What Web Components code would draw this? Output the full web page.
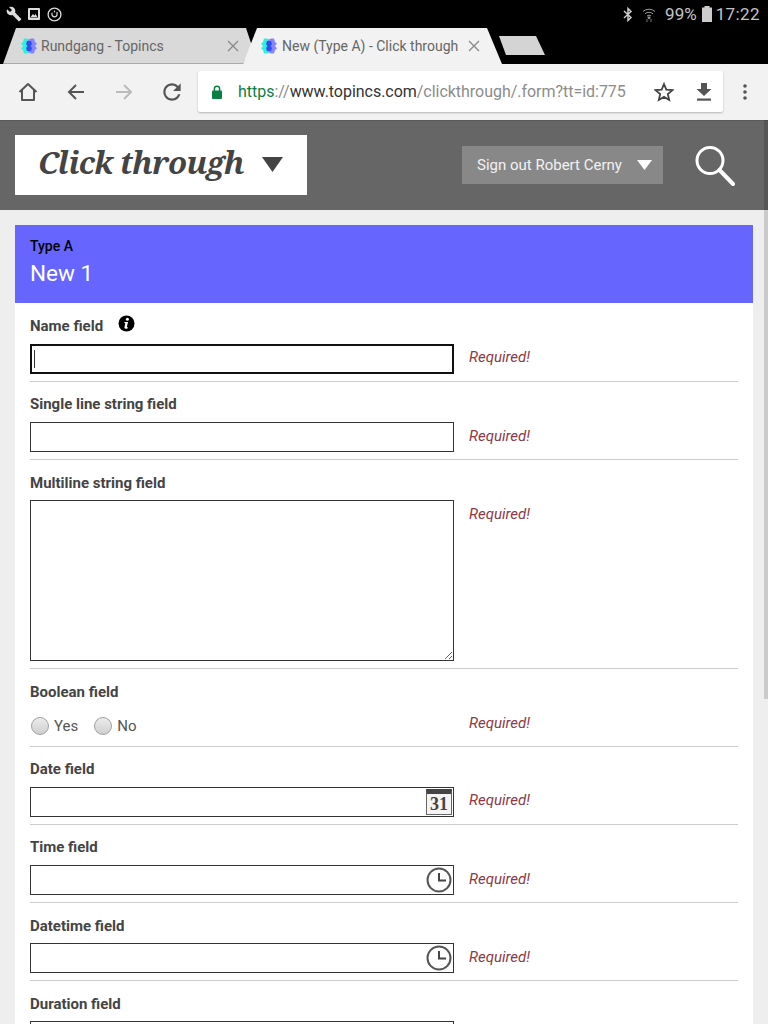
<!DOCTYPE html>
<html lang="en">
<head>
<meta charset="utf-8">
<title>New (Type A) - Click through</title>
<style>
  html, body { margin: 0; height: 1024px; overflow: hidden; background: #eee; }
  body { font-family: Roboto, "Liberation Sans", sans-serif; position: relative; }
</style>
</head>
<body>
<status-bar></status-bar>
<tab-strip>
  <browser-tab title-text="Rundgang - Topincs" inactive></browser-tab>
  <browser-tab title-text="New (Type A) - Click through"></browser-tab>
</tab-strip>
<browser-toolbar></browser-toolbar>
<page-header></page-header>
<form-card kind="Type A" name="New 1">
  <form-field label="Name field" info first>
    <text-control focused></text-control>
  </form-field>
  <form-field label="Single line string field" style="--hint-nudge:1px">
    <text-control></text-control>
  </form-field>
  <form-field label="Multiline string field" style="--label-nudge:1px;--hint-nudge:1px">
    <text-control multiline></text-control>
  </form-field>
  <form-field label="Boolean field" style="--label-nudge:1px">
    <bool-control></bool-control>
  </form-field>
  <form-field label="Date field" style="--hint-nudge:-1px">
    <text-control icon="calendar"></text-control>
  </form-field>
  <form-field label="Time field">
    <text-control icon="clock"></text-control>
  </form-field>
  <form-field label="Datetime field" style="--label-nudge:1px">
    <text-control icon="clock"></text-control>
  </form-field>
  <form-field label="Duration field" style="--label-nudge:1px" no-hint>
    <text-control></text-control>
  </form-field>
</form-card>
<page-scrollbar></page-scrollbar>

<script>
class StatusBar extends HTMLElement {
  constructor() {
    super();
    this.attachShadow({ mode: 'open' });
    this.shadowRoot.innerHTML = `
      <style>
        :host { display: flex; align-items: center; height: 28px; background: #000; padding: 0 8px 0 6px; box-sizing: border-box; color: #c4c4c4; font-size: 17px; }
        svg { display: block; flex: none; }
        .spacer { flex: 1; }
        .pct { margin-left: 9px; }
        .time { margin-left: 4px; letter-spacing: .4px; }
      </style>
      <svg width="16" height="16" viewBox="0 0 24 24" fill="#ddd"><path d="M22.7 19l-9.1-9.1c.9-2.3.4-5-1.5-6.9-2-2-5-2.4-7.4-1.3L9 6 6 9 1.6 4.7C.4 7.1.9 10.1 2.9 12.1c1.9 1.9 4.6 2.4 6.9 1.5l9.1 9.1c.4.4 1 .4 1.4 0l2.3-2.3c.5-.4.5-1.1.1-1.4z"/></svg>
      <svg width="13" height="13" viewBox="0 0 13 13" style="margin-left:6px"><rect x="0" y="0" width="12" height="12" rx="1" fill="#ddd"/><rect x="2" y="2" width="8" height="7.5" fill="#000"/><path d="M2.6 9 L5 6 L6.4 7.4 L7.6 6 L9.4 9 Z" fill="#ddd"/></svg>
      <svg width="15" height="15" viewBox="0 0 15 15" fill="none" stroke="#ddd" style="margin-left:6px"><circle cx="7.5" cy="7.5" r="6.4" stroke-width="1.3"/><path d="M5 5.8 V8 A2.6 2.6 0 0 0 10 8 V5" stroke-width="1.2"/><path d="M7.5 3.6 V5.4" stroke-width="1.2"/></svg>
      <span class="spacer"></span>
      <svg width="10" height="15" viewBox="0 0 10 15" fill="none" stroke="#ccc" stroke-width="1.5"><path d="M1 4 L8 10.5 L5 13.5 V1.5 L8 4.5 L1 11"/></svg>
      <svg width="14" height="15" viewBox="0 0 14 15" fill="none" stroke="#999" stroke-width="1" style="margin-left:9px"><path d="M1 4.5 A9 9 0 0 1 13 4.5"/><path d="M3 6.8 A6 6 0 0 1 11 6.8"/><path d="M5 9 A3 3 0 0 1 9 9"/><circle cx="7" cy="10.8" r="1" fill="#999"/><path d="M5 12 V15 M9 12 V15" stroke="#777"/></svg>
      <span class="pct">99%</span>
      <svg width="10" height="16" viewBox="0 0 10 16" fill="#ccc" style="margin-left:5px"><rect x="2.5" y="0" width="5" height="2"/><rect x="0" y="1.5" width="10" height="14.5"/></svg>
      <span class="time">17:22</span>
    `;
  }
}

class TabStrip extends HTMLElement {
  constructor() {
    super();
    this.attachShadow({ mode: 'open' });
    this.shadowRoot.innerHTML = `
      <style>
        :host { display: flex; height: 36px; background: #000; padding-left: 3px; box-sizing: border-box; }
        ::slotted(browser-tab:nth-of-type(2)) { margin-left: -9px; }
        .new-tab { width: 46px; height: 19px; margin: 8px 0 0 -3px; background: #d4d4d4; clip-path: polygon(0 0, 37px 0, 100% 100%, 7px 100%); }
      </style>
      <slot></slot>
      <div class="new-tab"></div>
    `;
  }
}

class BrowserTab extends HTMLElement {
  constructor() {
    super();
    this.attachShadow({ mode: 'open' });
    const inactive = this.hasAttribute('inactive');
    this.shadowRoot.innerHTML = `
      <style>
        :host { display: flex; align-items: center; box-sizing: border-box; height: 36px; width: ${inactive ? 249 : 259}px; padding: 0 ${inactive ? 13 : 22}px 0 18px;
          background: ${inactive ? 'linear-gradient(#d9d9d9 35px, #aaa 35px)' : '#f2f2f2'};
          clip-path: polygon(0 100%, ${inactive ? '13px 0, 243px 0, 249px 18px, 240px 100%' : '14px 0, 244px 0, 100% 100%'});
          position: relative; color: #666; font-size: 14px; ${inactive ? '' : 'z-index: 1;'} }
        svg { flex: none; display: block; }
        .label { flex: 1; margin-left: ${inactive ? 4 : 5}px; white-space: nowrap; overflow: hidden; }
      </style>
      <svg width="16" height="16" viewBox="0 0 16 16"><path d="M3 .5 H6 L9 2 V14 L6 15.5 H3 L2 12 L0 10.5 L2 8 L0 5.5 L2 4 Z" fill="#2ef0dc"/><path d="M13 .5 H10 L7 2 V14 L10 15.5 H13 L14 12 L16 10.5 L14 8 L16 5.5 L14 4 Z" fill="#8585ff"/><path d="M6 3 H10 L11 6 L9.5 8 L11 10 L10 13 H6 L5 10 L6.5 8 L5 6 Z" fill="#2f4cf0"/></svg>
      <span class="label">${this.getAttribute('title-text')}</span>
      <svg width="12" height="12" viewBox="0 0 12 12" stroke="#888" stroke-width="1.3"><path d="M1 1 L11 11 M11 1 L1 11"/></svg>
    `;
  }
}

class BrowserToolbar extends HTMLElement {
  constructor() {
    super();
    this.attachShadow({ mode: 'open' });
    this.shadowRoot.innerHTML = `
      <style>
        :host { display: flex; align-items: center; height: 56px; background: #f2f2f2; box-sizing: border-box; padding: 0 0 0 18px; }
        svg { display: block; flex: none; }
        .nav { display: flex; align-items: center; gap: 28px; width: 180px; }
        .omnibox { display: flex; align-items: center; width: 525px; height: 41px; margin-bottom: 1px; background: #fff; border-radius: 2px; box-shadow: 0 1px 2px rgba(0,0,0,.25); box-sizing: border-box; padding: 0 0 0 14px; }
        .url { margin-left: 16px; font-size: 16px; color: #333; white-space: nowrap; flex: 1; letter-spacing: -.03px; }
        .green { color: #0b8043; }
        .grey { color: #8c8c8c; }
        .menu { margin-left: 20px; }
      </style>
      <div class="nav">
        <svg width="20" height="20" viewBox="0 0 20 20" fill="none" stroke="#555" stroke-width="2" stroke-linejoin="round"><path d="M1.5 10 L10 2 L18.5 10 M4 8 V18 H16 V8"/></svg>
        <svg width="20" height="20" viewBox="0 0 20 20" fill="none" stroke="#555" stroke-width="2"><path d="M18 10 H3 M10 3 L3 10 L10 17"/></svg>
        <svg width="20" height="20" viewBox="0 0 20 20" fill="none" stroke="#bbb" stroke-width="2"><path d="M2 10 H17 M10 3 L17 10 L10 17"/></svg>
        <svg width="26" height="26" viewBox="0 0 24 24" fill="#555" style="margin:0 -3px"><path d="M17.65 6.35C16.2 4.9 14.21 4 12 4c-4.42 0-7.99 3.58-7.99 8s3.57 8 7.99 8c3.73 0 6.84-2.55 7.73-6h-2.08c-.82 2.33-3.04 4-5.65 4-3.31 0-6-2.69-6-6s2.69-6 6-6c1.66 0 3.14.69 4.22 1.78L13 11h7V4l-2.35 2.35z"/></svg>
      </div>
      <div class="omnibox">
        <svg width="10" height="14" viewBox="0 0 10 14"><path d="M2.4 6 V3.8 A2.6 2.6 0 0 1 7.6 3.8 V6" fill="none" stroke="#0b8043" stroke-width="1.5"/><rect x="0" y="5.5" width="10" height="8.5" rx="1" fill="#0b8043"/></svg>
        <span class="url"><span class="green">https</span><span class="grey">://</span>www.topincs.com<span class="grey">/clickthrough/.form?tt=id:775</span></span>
        <svg width="20" height="20" viewBox="0 0 20 20" fill="none" stroke="#444" stroke-width="1.8" stroke-linejoin="miter" style="margin-right:22px"><path d="M10 2 L12.3 7.6 L18.4 8.1 L13.8 12.1 L15.2 18 L10 14.9 L4.8 18 L6.2 12.1 L1.6 8.1 L7.7 7.6 Z"/></svg>
        <svg width="16" height="18" viewBox="0 0 16 18" fill="#555" style="margin-right:11px"><path d="M5 0 H11 V6 H15.5 L8 13 L.5 6 H5 Z"/><rect x="1" y="15.5" width="14" height="2.2"/></svg>
      </div>
      <svg class="menu" width="4" height="16" viewBox="0 0 4 16" fill="#555"><circle cx="2" cy="2" r="1.8"/><circle cx="2" cy="8" r="1.8"/><circle cx="2" cy="14" r="1.8"/></svg>
    `;
  }
}

class PageHeader extends HTMLElement {
  constructor() {
    super();
    this.attachShadow({ mode: 'open' });
    this.shadowRoot.innerHTML = `
      <style>
        :host { display: flex; align-items: flex-start; height: 90px; background: #666; border-top: 1px solid #5a5a5a; box-sizing: border-box; padding: 14px 33px 0 15px; }
        svg { display: block; flex: none; }
        .title { display: flex; align-items: center; width: 292px; height: 60px; box-sizing: border-box; padding: 0 24px 7px 23px; background: #fff; color: #444; justify-content: space-between; }
        .title span { font: italic bold 31px "Noto Serif", "DejaVu Serif", serif; white-space: nowrap; letter-spacing: -.6px; }
        .signout { display: flex; align-items: center; justify-content: space-between; width: 201px; height: 38px; margin: 11px 32px 0 auto; box-sizing: border-box; padding: 0 11px 0 15px; background: #888; color: #f2f2f2; font-size: 15px; white-space: nowrap; }
        .search { margin-top: 10px; }
      </style>
      <div class="title"><span>Click through</span><svg width="21" height="15" viewBox="0 0 21 15" fill="#444" style="margin-top:6px"><path d="M0 0 H21 L10.5 15 Z"/></svg></div>
      <div class="signout">Sign out Robert Cerny<svg width="15" height="10" viewBox="0 0 15 10" fill="#fff"><path d="M0 0 H15 L7.5 10 Z"/></svg></div>
      <svg class="search" width="40" height="42" viewBox="0 0 40 42" fill="none" stroke="#fff" stroke-linecap="round"><circle cx="15" cy="15.5" r="13" stroke-width="3"/><path d="M24.5 25 L38 39" stroke-width="4"/></svg>
    `;
  }
}

class FormCard extends HTMLElement {
  constructor() {
    super();
    this.attachShadow({ mode: 'open' });
    this.shadowRoot.innerHTML = `
      <style>
        :host { display: block; margin: 15px 15px 0; background: #fff; }
        header { height: 78px; background: #66f; box-sizing: border-box; padding: 13px 15px 0; }
        .kind { font-size: 14px; font-weight: 500; line-height: 16px; color: #000; }
        .name { font-size: 22.5px; line-height: 28px; margin-top: 5px; color: #fff; }
        .fields { padding: 0 15px; }
      </style>
      <header>
        <div class="kind">${this.getAttribute('kind')}</div>
        <div class="name">${this.getAttribute('name')}</div>
      </header>
      <div class="fields"><slot></slot></div>
    `;
  }
}

class FormField extends HTMLElement {
  constructor() {
    super();
    this.attachShadow({ mode: 'open' });
    const info = this.hasAttribute('info') ? `
      <svg width="17" height="17" viewBox="0 0 17 17"><circle cx="8.5" cy="8.5" r="8" fill="#000"/><circle cx="9.4" cy="4.3" r="1.5" fill="#fff"/><path d="M6.4 7 H10 L8.9 11.8 Q8.8 12.6 9.9 12.2 L9.8 13.2 Q8.4 14 7 13.6 Q6.2 13.2 6.5 12 L7.3 8 H6.4 Z" fill="#fff"/></svg>` : '';
    const hint = this.hasAttribute('no-hint') ? '' : '<div class="required">Required!</div>';
    // row heights are fractional on purpose, the rows in the reference do not sit on whole pixels
    this.shadowRoot.innerHTML = `
      <style>
        :host { display: grid; grid-template-columns: 424px 1fr; column-gap: 15px; box-sizing: border-box; padding: ${this.hasAttribute('first') ? 12.5 : 12.15}px 0 7px; border-bottom: 1px solid #ccc; }
        .label { grid-column: 1 / -1; display: flex; align-items: flex-start; gap: 15px; height: 20px; margin-bottom: 8px; font-size: 15px; font-weight: 700; line-height: 20px; color: #444; }
        .label span { margin-top: var(--label-nudge, 0px); }
        svg { display: block; margin-top: -1px; }
        .required { font-size: 15px; font-style: italic; line-height: 20px; padding-top: calc(3.6px + var(--hint-nudge, 0px)); color: #8c3a47; }
      </style>
      <div class="label"><span>${this.getAttribute('label')}</span>${info}</div>
      <slot></slot>
      ${hint}
    `;
  }
}

class TextControl extends HTMLElement {
  constructor() {
    super();
    this.attachShadow({ mode: 'open' });
    const focused = this.hasAttribute('focused');
    const multiline = this.hasAttribute('multiline');
    const field = multiline ? '<textarea></textarea>' : '<input type="text">';
    let icon = '';
    if (this.getAttribute('icon') === 'calendar') {
      icon = '<span class="icon cal"><span>31</span></span>';
    } else if (this.getAttribute('icon') === 'clock') {
      icon = '<svg class="icon" width="26" height="26" viewBox="0 0 26 26" fill="none" stroke="#444" stroke-width="2"><circle cx="13" cy="13" r="11.5" stroke="#555"/><path d="M13 6 V13.5 H20"/></svg>';
    }
    this.shadowRoot.innerHTML = `
      <style>
        :host { display: block; position: relative; height: ${multiline ? 161 : 30}px; }
        input, textarea { display: block; width: 100%; height: 100%; box-sizing: border-box; margin: 0; padding: 0 3px; border: ${focused ? '2px solid #111' : '1px solid #333'}; border-radius: 0; outline: 0; background: #fff; }
        .caret { position: absolute; left: 4px; top: 6px; width: 1px; height: 18px; background: #333; }
        .icon { position: absolute; right: 2px; top: 2px; }
        .cal { box-sizing: border-box; width: 26px; height: 26px; border: 1px solid #666; border-top: 5px solid #444; background: #f4f4f4; text-align: center; font: bold 18px/20px "Liberation Serif", serif; color: #444; }
      </style>
      ${field}${focused ? '<span class="caret"></span>' : ''}${icon}
    `;
  }
}

class BoolControl extends HTMLElement {
  constructor() {
    super();
    this.attachShadow({ mode: 'open' });
    this.shadowRoot.innerHTML = `
      <style>
        :host { display: flex; align-items: flex-start; height: 30px; color: #555; font-size: 15px; line-height: 18px; padding: 8px 0 0 1px; box-sizing: border-box; }
        label { display: flex; align-items: center; gap: 5px; margin-right: 16px; }
        input { appearance: none; width: 18px; height: 18px; margin: 0; border: 1px solid #a0a0a0; border-radius: 50%; background: linear-gradient(#ececec, #cfcfcf); box-sizing: border-box; }
      </style>
      <label><input type="radio" name="b">Yes</label>
      <label><input type="radio" name="b">No</label>
    `;
  }
}

class PageScrollbar extends HTMLElement {
  constructor() {
    super();
    this.attachShadow({ mode: 'open' });
    this.shadowRoot.innerHTML = `
      <style>
        :host { position: absolute; top: 120px; right: 0; width: 4px; height: 579px; background: rgba(0,0,0,.15); }
      </style>
    `;
  }
}

customElements.define('status-bar', StatusBar);
customElements.define('tab-strip', TabStrip);
customElements.define('browser-tab', BrowserTab);
customElements.define('browser-toolbar', BrowserToolbar);
customElements.define('page-header', PageHeader);
customElements.define('form-card', FormCard);
customElements.define('form-field', FormField);
customElements.define('text-control', TextControl);
customElements.define('bool-control', BoolControl);
customElements.define('page-scrollbar', PageScrollbar);
</script>
</body>
</html>
